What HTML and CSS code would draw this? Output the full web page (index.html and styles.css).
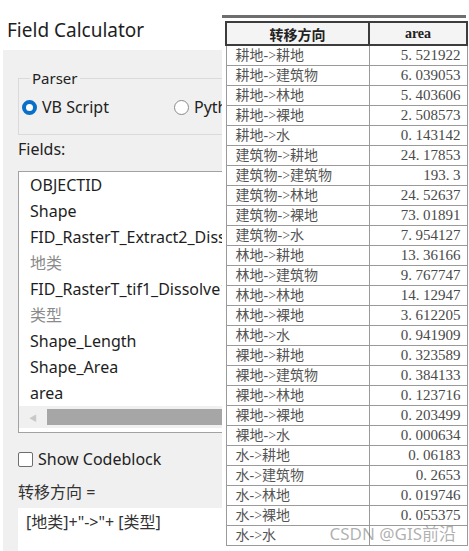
FILE: index.html
```html
<!DOCTYPE html>
<html>
<head>
<meta charset="utf-8">
<link rel="stylesheet" href="styles.css">
</head>
<body>
<div class="dialog">
  <div class="title">Field Calculator</div>
  <div class="panel">
    <fieldset class="group">
      <legend>Parser</legend>
      <div class="options">
        <div class="opt"><span class="radio on"></span>VB Script</div>
        <div class="opt"><span class="radio"></span>Pyth</div>
      </div>
    </fieldset>
    <div class="label">Fields:</div>
    <div class="listbox">
      <div class="item">OBJECTID</div>
      <div class="item">Shape</div>
      <div class="item">FID_RasterT_Extract2_Diss</div>
      <div class="item cn">地类</div>
      <div class="item">FID_RasterT_tif1_Dissolve1</div>
      <div class="item cn">类型</div>
      <div class="item">Shape_Length</div>
      <div class="item">Shape_Area</div>
      <div class="item">area</div>
      <div class="hscroll"><span class="arrow">&#9664;</span><span class="thumb"></span></div>
    </div>
    <div class="check"><span class="box"></span>Show Codeblock</div>
    <div class="expr-label">转移方向 =</div>
    <div class="expr">[地类]+"-&gt;"+ [类型]</div>
  </div>
</div>

<div class="sheet">
  <table>
    <thead>
      <tr><th class="c1">转移方向</th><th class="c2">area</th></tr>
    </thead>
    <tbody>
      <tr><td>耕地-&gt;耕地</td><td class="n">5<span class="d">.</span>521922</td></tr>
      <tr><td>耕地-&gt;建筑物</td><td class="n">6<span class="d">.</span>039053</td></tr>
      <tr><td>耕地-&gt;林地</td><td class="n">5<span class="d">.</span>403606</td></tr>
      <tr><td>耕地-&gt;裸地</td><td class="n">2<span class="d">.</span>508573</td></tr>
      <tr><td>耕地-&gt;水</td><td class="n">0<span class="d">.</span>143142</td></tr>
      <tr><td>建筑物-&gt;耕地</td><td class="n">24<span class="d">.</span>17853</td></tr>
      <tr><td>建筑物-&gt;建筑物</td><td class="n">193<span class="d">.</span>3</td></tr>
      <tr><td>建筑物-&gt;林地</td><td class="n">24<span class="d">.</span>52637</td></tr>
      <tr><td>建筑物-&gt;裸地</td><td class="n">73<span class="d">.</span>01891</td></tr>
      <tr><td>建筑物-&gt;水</td><td class="n">7<span class="d">.</span>954127</td></tr>
      <tr><td>林地-&gt;耕地</td><td class="n">13<span class="d">.</span>36166</td></tr>
      <tr><td>林地-&gt;建筑物</td><td class="n">9<span class="d">.</span>767747</td></tr>
      <tr><td>林地-&gt;林地</td><td class="n">14<span class="d">.</span>12947</td></tr>
      <tr><td>林地-&gt;裸地</td><td class="n">3<span class="d">.</span>612205</td></tr>
      <tr><td>林地-&gt;水</td><td class="n">0<span class="d">.</span>941909</td></tr>
      <tr><td>裸地-&gt;耕地</td><td class="n">0<span class="d">.</span>323589</td></tr>
      <tr><td>裸地-&gt;建筑物</td><td class="n">0<span class="d">.</span>384133</td></tr>
      <tr><td>裸地-&gt;林地</td><td class="n">0<span class="d">.</span>123716</td></tr>
      <tr><td>裸地-&gt;裸地</td><td class="n">0<span class="d">.</span>203499</td></tr>
      <tr><td>裸地-&gt;水</td><td class="n">0<span class="d">.</span>000634</td></tr>
      <tr><td>水-&gt;耕地</td><td class="n">0<span class="d">.</span>06183</td></tr>
      <tr><td>水-&gt;建筑物</td><td class="n">0<span class="d">.</span>2653</td></tr>
      <tr><td>水-&gt;林地</td><td class="n">0<span class="d">.</span>019746</td></tr>
      <tr><td>水-&gt;裸地</td><td class="n">0<span class="d">.</span>055375</td></tr>
      <tr><td>水-&gt;水</td><td class="n"></td></tr>
    </tbody>
  </table>
  <div class="watermark">CSDN @GIS前沿</div>
</div>
</body>
</html>
```

FILE: styles.css
```css
html, body {
  margin: 0;
  padding: 0;
}
body {
  width: 469px;
  height: 551px;
  overflow: hidden;
  position: relative;
  background: #ffffff;
  font-family: "Noto Sans", "Noto Sans CJK SC", sans-serif;
  color: #222;
}
.dialog {
  width: 222px;
  overflow: hidden;
}
.title {
  height: 50px;
  box-sizing: border-box;
  padding: 17px 0 0 7px;
  font-size: 19px;
  line-height: 26px;
  color: #1e1e1e;
  white-space: nowrap;
}
.panel {
  margin-left: 3px;
  width: 219px;
  height: 501px;
  box-sizing: border-box;
  background: #f0f0f0;
  padding: 19px 0 0 15px;
}
.group {
  margin: 0 -4px 0 0;
  border: 1px solid #dadada;
  border-right: 0;
  padding: 11px 0 18px 3px;
  font-size: 15px;
}
.group legend {
  margin-left: 8px;
  padding: 0 2px;
  line-height: 18px;
  color: #222;
}
.options {
  display: grid;
  grid-template-columns: 152px auto;
  height: 18px;
  align-items: center;
  font-size: 16px;
}
.opt {
  display: flex;
  align-items: center;
  gap: 5px;
  line-height: 18px;
  white-space: nowrap;
}
.radio {
  width: 15px;
  height: 15px;
  box-sizing: border-box;
  border-radius: 50%;
  border: 1px solid #8a8a8a;
  background: #fff;
}
.radio.on {
  border: 4.5px solid #0a6fc8;
}
.label {
  margin-top: 4px;
  margin-bottom: 12px;
  font-size: 16px;
  line-height: 20px;
}
.listbox {
  height: 262px;
  box-sizing: border-box;
  border: 1px solid #a2a2a2;
  border-right: 0;
  background: #fff;
  overflow: hidden;
}
.item {
  height: 26px;
  line-height: 26px;
  padding-left: 11px;
  font-size: 16px;
  white-space: nowrap;
  overflow: hidden;
  color: #1e1e1e;
}
.item.cn {
  color: #8a8a8a;
}
.hscroll {
  height: 22px;
  background: #f0f0f0;
  display: flex;
  align-items: center;
}
.arrow {
  width: 28px;
  text-align: center;
  font-size: 8px;
  color: #c8c8c8;
}
.thumb {
  height: 16px;
  flex: 1;
  background: #a6a6a6;
}
.check {
  margin-top: 17px;
  display: flex;
  align-items: center;
  gap: 5px;
  height: 18px;
  font-size: 16px;
  line-height: 18px;
}
.box {
  width: 15px;
  height: 15px;
  box-sizing: border-box;
  border: 1px solid #6e6e6e;
  border-radius: 2px;
  background: #fff;
}
.expr-label {
  margin-top: 14px;
  font-size: 16px;
  line-height: 20px;
  color: #333;
}
.expr {
  margin-top: 6px;
  height: 60px;
  background: #fff;
  padding: 4px 0 0 8px;
  font-size: 16px;
  line-height: 20px;
  color: #333;
  white-space: nowrap;
}

/* pasted table */
.sheet {
  position: absolute;
  left: 222px;
  top: 15px;
  width: 244px;
  box-sizing: border-box;
  border-top: 3px solid #6e6e6e;
  background: #fff;
  padding: 3px 4px 0 3px;
}
.sheet table {
  width: 237px;
  border-collapse: collapse;
  table-layout: fixed;
  font-family: "Liberation Serif", "Noto Sans CJK SC", serif;
  font-size: 14px;
  color: #555;
}
.sheet th {
  height: 21px;
  padding: 0;
  background: #f4f4f4;
  border: 2px solid #3c3c3c;
  font-weight: bold;
  color: #222;
  text-align: center;
}
.sheet th.c1 { width: 141px; }
.sheet th.c2 { width: 96px; }
.sheet td {
  height: 19px;
  padding: 0 0 0 9px;
  border: 1px solid #9a9a9a;
  line-height: 19px;
  white-space: nowrap;
}
.sheet td.n {
  text-align: right;
  padding: 0 6px 0 0;
  font-size: 15px;
  color: #4a4a4a;
}
.d {
  margin-right: 3.5px;
}
.watermark {
  position: absolute;
  right: 10px;
  bottom: 4px;
  line-height: 17px;
  font-family: "Noto Sans", "Noto Sans CJK SC", sans-serif;
  font-size: 17px;
  color: rgba(110, 110, 110, 0.55);
  white-space: nowrap;
}
```
